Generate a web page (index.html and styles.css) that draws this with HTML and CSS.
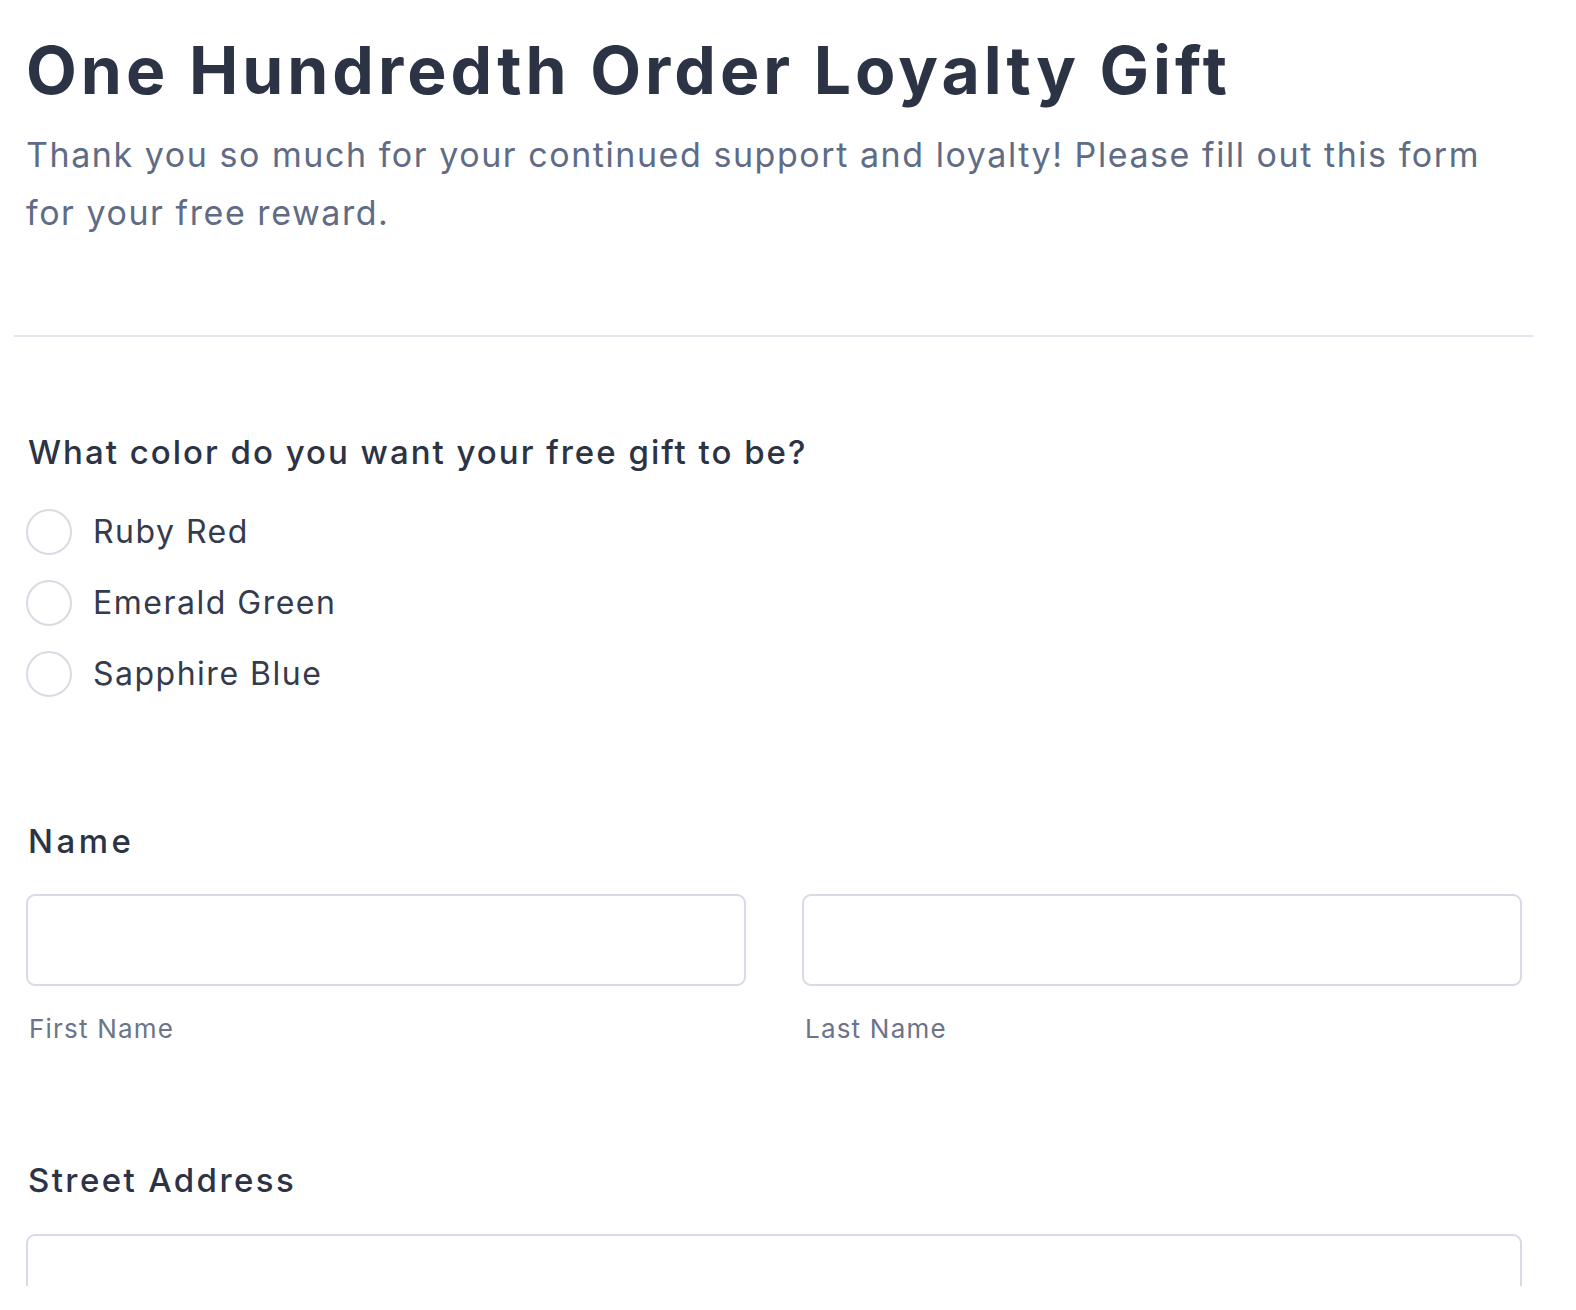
FILE: index.html
```html
<!DOCTYPE html>
<html lang="en">
<head>
<meta charset="utf-8">
<title>One Hundredth Order Loyalty Gift</title>
<link rel="stylesheet" href="styles.css">
</head>
<body>
<main class="form">
  <header class="form-header">
    <h1 class="form-title">One Hundredth Order Loyalty Gift</h1>
    <p class="form-subtitle">Thank you so much for your continued support and loyalty! Please fill out this form for your free reward.</p>
  </header>
  <div class="fields">
    <fieldset class="field field-radio">
      <legend class="field-label">What color do you want your free gift to be?</legend>
      <label class="option"><input type="radio" name="color" class="radio"><span class="option-text">Ruby Red</span></label>
      <label class="option"><input type="radio" name="color" class="radio"><span class="option-text">Emerald Green</span></label>
      <label class="option"><input type="radio" name="color" class="radio"><span class="option-text">Sapphire Blue</span></label>
    </fieldset>
    <div class="field field-name">
      <div class="field-label label-name">Name</div>
      <div class="name-row">
        <div class="name-col">
          <input type="text" class="text-input">
          <div class="sublabel">First Name</div>
        </div>
        <div class="name-col">
          <input type="text" class="text-input">
          <div class="sublabel">Last Name</div>
        </div>
      </div>
    </div>
    <div class="field field-address">
      <div class="field-label label-address">Street Address</div>
      <input type="text" class="text-input">
    </div>
  </div>
</main>
</body>
</html>
```
FILE: styles.css
```css
* { box-sizing: border-box; }
html, body { margin: 0; padding: 0; background: #ffffff; }
body {
  font-family: Inter, "Noto Sans", sans-serif;
  color: #2c3345;
}
.form {
  width: 1519px;
  margin-left: 14px;
  height: 1286px;
  overflow: hidden;
}
.form-header {
  padding: 31px 12px 0;
  height: 337px;
  border-bottom: 2px solid #e3e5ec;
}
.form-title {
  margin: 0;
  font-size: 66px;
  line-height: 78px;
  font-weight: 700;
  color: #2c3345;
  letter-spacing: 4px;
}
.form-subtitle {
  margin: 17px 0 0;
  font-size: 34px;
  line-height: 58px;
  font-weight: 400;
  color: #606b85;
  letter-spacing: 1.55px;
}
.fields {
  padding: 0 11px 0 12px;
}
.field-radio {
  border: 0;
  margin: 0;
  padding: 95px 0 0;
  min-width: 0;
}
.field-label {
  font-size: 33px;
  line-height: 40px;
  font-weight: 500;
  color: #2c3345;
  padding: 0 0 0 2px;
  letter-spacing: 2px;
}
.label-name {
  letter-spacing: 3.5px;
}
.label-address {
  letter-spacing: 2.4px;
}
.field-radio .field-label {
  float: left;
  width: 100%;
  margin-bottom: 24px;
}
.option {
  clear: both;
  display: flex;
  align-items: center;
  height: 71px;
  gap: 21px;
}
.radio {
  appearance: none;
  -webkit-appearance: none;
  margin: 0;
  width: 46px;
  height: 46px;
  border: 2px solid #d8dbe4;
  border-radius: 50%;
  background: #ffffff;
  flex: none;
}
.option-text {
  font-size: 32px;
  line-height: 40px;
  color: #343b4d;
  letter-spacing: 1.5px;
}
.field-name {
  padding-top: 112px;
}
.name-row {
  display: flex;
  gap: 56px;
  margin-top: 33px;
}
.name-col {
  flex: 1 1 0;
  min-width: 0;
}
.text-input {
  display: block;
  width: 100%;
  height: 92px;
  margin: 0;
  border: 2px solid #d8dbe5;
  border-radius: 9px;
  background: #ffffff;
  font: inherit;
}
.sublabel {
  margin-top: 27px;
  font-size: 26px;
  line-height: 32px;
  color: #6b7489;
  padding-left: 3px;
  letter-spacing: 1.2px;
}
.field-address {
  padding-top: 115px;
}
.field-address .text-input {
  margin-top: 34px;
}
```
